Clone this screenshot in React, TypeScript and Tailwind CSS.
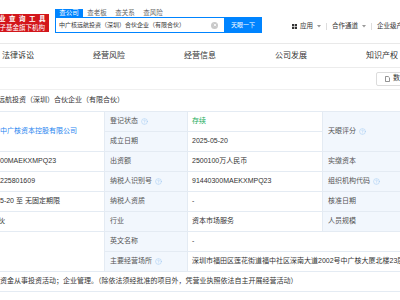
import React from "react";
import { CircleHelp } from "lucide-react";

function Q() {
  return <CircleHelp size={7} strokeWidth={1.6} className="ml-[3px] shrink-0 text-[#9cc6f2]" />;
}

const LABEL =
  "flex items-center pl-[5px] bg-[#f2f7fd] border-r border-b border-[#e4ebf3] text-[#555] text-[7px] whitespace-nowrap overflow-hidden";
const VBASE =
  "flex items-center pl-[4px] bg-white border-r border-b border-[#e4ebf3] text-[7px] whitespace-nowrap overflow-hidden";
const VALUE = `${VBASE} text-[#333]`;
const ABASE =
  "flex items-center bg-white border-r border-b border-[#e4ebf3] text-[7px] whitespace-nowrap overflow-hidden";
const AVAL = `${ABASE} text-[#333]`;

function Caret() {
  return (
    <svg width="4" height="3" viewBox="0 0 4 3" className="ml-[4px]">
      <path d="M0 0 L4 0 L2 2.5 Z" fill="#999" />
    </svg>
  );
}

export default function App() {
  return (
    <div className="w-[400px] h-[300px] overflow-hidden bg-white font-['Liberation_Sans','Noto_Sans_CJK_SC',sans-serif]">
      {/* header */}
      <div className="h-[44px] border-b border-[#e9e9e9] bg-white flex items-start">
        <div className="mt-[14px] w-[49px] h-[18px] shrink-0 bg-[#d3161b] flex flex-col items-end justify-center overflow-hidden">
          <div className="text-white text-[6.5px] leading-[9px] tracking-[3.5px] whitespace-nowrap font-bold">商业查询工具</div>
          <div className="text-white text-[6.5px] leading-[9px] whitespace-nowrap pr-[4px]">国家中小企业发展子基金旗下机构</div>
        </div>
        <div className="ml-[6px] mt-[9px] flex flex-col shrink-0">
          <div className="flex h-[8px]">
            <div className="w-[28px] bg-[#0084ff] text-white text-[6.5px] flex items-center justify-center">查公司</div>
            <div className="w-[28px] text-[#666] text-[6.5px] flex items-center justify-center">查老板</div>
            <div className="w-[28px] text-[#666] text-[6.5px] flex items-center justify-center">查关系</div>
            <div className="w-[28px] text-[#666] text-[6.5px] flex items-center justify-center">查风险</div>
          </div>
          <div className="w-[207px] h-[16px] border border-[#0084ff] flex items-center">
            <div className="flex-1 pl-[3px] text-[6px] text-[#333] whitespace-nowrap overflow-hidden">
              中广核远航投资（深圳）合伙企业（有限合伙）
            </div>
            <div className="w-[7px] h-[7px] rounded-full bg-[#c9c9c9] flex items-center justify-center mr-[6px]">
              <svg width="4" height="4" viewBox="0 0 4 4">
                <path d="M0.8 0.8 L3.2 3.2 M3.2 0.8 L0.8 3.2" stroke="#fff" strokeWidth="0.8" />
              </svg>
            </div>
            <div className="w-[38px] h-[16px] -mr-px bg-[#0084ff] text-white text-[6px] flex items-center justify-center">
              天眼一下
            </div>
          </div>
        </div>
        <div className="ml-[30px] mt-[22px] h-[8px] flex items-center text-[6.5px] text-[#333] whitespace-nowrap">
          <svg width="5" height="5" viewBox="0 0 5 5">
            <rect x="0" y="0" width="2.2" height="2.2" fill="#333" />
            <rect x="2.8" y="0" width="2.2" height="2.2" fill="#333" />
            <rect x="0" y="2.8" width="2.2" height="2.2" fill="#333" />
            <rect x="2.8" y="2.8" width="2.2" height="2.2" fill="#333" />
          </svg>
          <span className="ml-[3px]">应用</span>
          <Caret />
          <span className="ml-[5px] w-px h-[7px] bg-[#ddd]" />
          <span className="ml-[5px]">合作通道</span>
          <Caret />
          <span className="ml-[5px] w-px h-[7px] bg-[#ddd]" />
          <span className="ml-[5px]">企业级产品</span>
        </div>
      </div>

      {/* tab row */}
      <div className="h-[24px] border-b border-[#ececec] bg-white flex items-center pl-[2px] text-[8px] text-[#333] whitespace-nowrap">
        <div className="w-[91px] shrink-0">法律诉讼</div>
        <div className="w-[91px] shrink-0">经营风险</div>
        <div className="w-[91px] shrink-0">经营信息</div>
        <div className="w-[91px] shrink-0">公司发展</div>
        <div className="w-[91px] shrink-0">知识产权</div>
      </div>

      {/* band */}
      <div className="h-[22px] border-b border-[#f0f0f0] flex items-center justify-end">
        <div className="-mr-[30px] h-[14px] px-[8px] border border-[#dcdcdc] rounded-[2px] flex items-center text-[7px] text-[#333] whitespace-nowrap bg-white">
          <svg width="5" height="6" viewBox="0 0 5 6">
            <path d="M0.5 0.5 H3.2 L4.5 1.8 V5.5 H0.5 Z" fill="none" stroke="#666" strokeWidth="0.7" />
          </svg>
          <span className="ml-[3px]">数据纠错</span>
        </div>
      </div>

      {/* name row */}
      <div className="h-[21px] flex items-center text-[7px] text-[#333] whitespace-nowrap overflow-hidden">
        <span className="-ml-[2px]">远航投资（深圳）合伙企业（有限合伙）</span>
      </div>

      {/* table */}
      <div className="grid grid-cols-[105px_83px_135px_100px] auto-rows-[20px] border-t border-[#e4ebf3] w-[423px]">
        {/* row 1-2 */}
        <div className={`${ABASE} row-span-2 text-[#1f86f0]`}>中广核资本控股有限公司</div>
        <div className={LABEL}>登记状态<Q /></div>
        <div className={`${VBASE} text-[#1aad5a]`}>存续</div>
        <div className={`${LABEL} row-span-2`}>天眼评分<Q /></div>
        <div className={LABEL}>成立日期</div>
        <div className={VALUE}>2025-05-20</div>
        {/* row 3 */}
        <div className={AVAL}>00MAEKXMPQ23</div>
        <div className={LABEL}>出资额</div>
        <div className={VALUE}>2500100万人民币</div>
        <div className={LABEL}>实缴资本</div>
        {/* row 4 */}
        <div className={AVAL}>225801609</div>
        <div className={LABEL}>纳税人识别号<Q /></div>
        <div className={VALUE}>91440300MAEKXMPQ23</div>
        <div className={LABEL}>组织机构代码<Q /></div>
        {/* row 5 */}
        <div className={AVAL}>5-20 至 无固定期限</div>
        <div className={LABEL}>纳税人资质</div>
        <div className={VALUE}>-</div>
        <div className={LABEL}>核准日期</div>
        {/* row 6 */}
        <div className={AVAL}><span className="-ml-[2px]">伙</span></div>
        <div className={LABEL}>行业</div>
        <div className={VALUE}>资本市场服务</div>
        <div className={LABEL}>人员规模</div>
        {/* row 7-8 */}
        <div className={`${AVAL} row-span-2`}></div>
        <div className={LABEL}>英文名称</div>
        <div className={`${VALUE} col-span-2`}>-</div>
        <div className={LABEL}>主要经营场所<Q /></div>
        <div className={`${VALUE} col-span-2`}>深圳市福田区莲花街道福中社区深南大道2002号中广核大厦北楼23层</div>
        {/* row 9 */}
        <div className={`${AVAL} col-span-4`}>
          资金从事投资活动；企业管理。（除依法须经批准的项目外，凭营业执照依法自主开展经营活动）
        </div>
      </div>
    </div>
  );
}
